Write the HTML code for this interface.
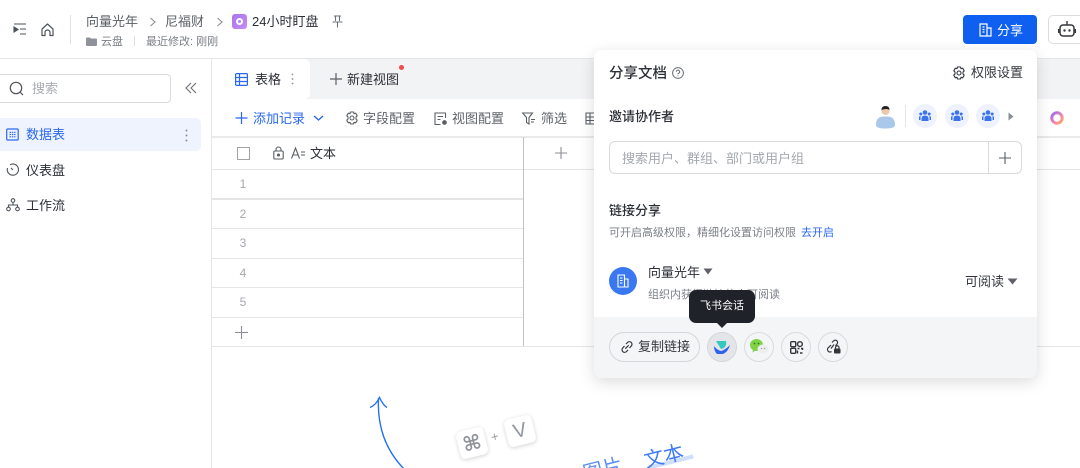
<!DOCTYPE html>
<html lang="zh"><head><meta charset="utf-8">
<style>
*{box-sizing:border-box}
html,body{margin:0;padding:0;width:1080px;height:468px;overflow:hidden;background:#fff}
#w{position:absolute;left:0;top:0;width:1080px;height:468px;overflow:hidden;background:#fff;filter:blur(.35px);font-family:"Liberation Sans","Noto Sans CJK SC",sans-serif;color:#2b2f36}
.a{position:absolute}
.t{position:absolute;white-space:nowrap;line-height:20px;height:20px;font-size:13px}
.l{position:absolute;background:#e4e5e7}
svg{position:absolute;overflow:visible}
.n{position:absolute;left:236px;width:14px;text-align:center;font-size:12px;line-height:16px;color:#a4a8ae}
.circ{position:absolute;width:30px;height:30px;border-radius:50%;border:1px solid #d9dadc;top:332px}
.g{position:absolute;width:24px;height:24px;border-radius:50%;background:#edf2fe;top:104px}
</style></head><body><div id="w">

<!-- top bar -->
<svg style="left:13px;top:23px" width="14" height="13" fill="none" stroke="#4e5359" stroke-width="1.100"><path d="M1 1H13M7 6H13M7 11H13"/><path d="M1 4L5 6.500 1 9Z" fill="#4e5359"/></svg>
<svg style="left:41px;top:23px" width="14" height="14" fill="none" stroke="#4e5359" stroke-width="1.200"><path d="M1 6L6.500 1 12 6V12.500H9V9.500A2.500 2.500 0 0 0 4 9.500V12.500H1Z" stroke-linejoin="round"/></svg>
<div class="l" style="left:70px;top:15px;width:1px;height:29px;background:#dfe0e2"></div>
<div class="t" style="left:86px;top:12px;color:#5a5f66">向量光年</div>
<svg style="left:149px;top:17px" width="8" height="10" fill="none" stroke="#8a8e94" stroke-width="1.100"><path d="M1.500 1L6 5 1.500 9"/></svg>
<div class="t" style="left:165px;top:12px;color:#5a5f66">尼福财</div>
<svg style="left:216px;top:17px" width="8" height="10" fill="none" stroke="#8a8e94" stroke-width="1.100"><path d="M1.500 1L6 5 1.500 9"/></svg>
<div class="a" style="left:232px;top:14px;width:15px;height:15px;border-radius:3px;background:linear-gradient(135deg,#a876f0,#c58cf2)"></div>
<div class="a" style="left:236px;top:18px;width:7px;height:7px;border-radius:50%;border:2px solid #fff"></div>
<div class="t" style="left:252px;top:12px;color:#2b2f36">24小时盯盘</div>
<svg style="left:332px;top:15px" width="11" height="13" fill="none" stroke="#6b7077" stroke-width="1.100"><path d="M2 1H9M3.500 1V6M7.500 1V6M0.500 7H10.500M5.500 7V12.500"/></svg>
<svg style="left:86px;top:37px" width="11" height="9"><path d="M0 1.500Q0 .5 1 .5H4L5 1.500H10Q11 1.500 11 2.500V8Q11 9 10 9H1Q0 9 0 8Z" fill="#8f9399"/></svg>
<div class="t" style="left:101px;top:32px;font-size:11px;color:#7c8087">云盘</div>
<div class="l" style="left:134px;top:36px;width:1px;height:10px;background:#dfe0e2"></div>
<div class="t" style="left:146px;top:32px;font-size:11px;color:#7c8087">最近修改: 刚刚</div>

<div class="a" style="left:963px;top:15px;width:74px;height:29px;border-radius:4px;background:#0f5ff0"></div>
<svg style="left:979px;top:23px" width="13" height="14" fill="none" stroke="#fff" stroke-width="1.200"><path d="M1 13V1H8V13ZM8 5H12V13H1"/><path d="M3.500 4H5.500M3.500 6.500H5.500M3.500 9H5.500"/></svg>
<div class="t" style="left:997px;top:21px;color:#fff">分享</div>
<div class="a" style="left:1048px;top:15px;width:60px;height:29px;border-radius:5px;border:1px solid #dcdde0"></div>
<svg style="left:1058px;top:21px" width="18" height="17"><rect x="2" y="4" width="14" height="11" rx="3" fill="none" stroke="#33373d" stroke-width="1.500"/><path d="M9 0V4M0.700 8V12M17.300 8V12" stroke="#33373d" stroke-width="1.400"/><circle cx="6.500" cy="9.500" r="1.200" fill="#33373d"/><circle cx="11.500" cy="9.500" r="1.200" fill="#33373d"/></svg>
<div class="l" style="left:0;top:58px;width:1080px;height:1px;background:#e5e6e8"></div>

<!-- sidebar -->
<div class="l" style="left:211px;top:59px;width:1px;height:409px;background:#e5e6e8"></div>
<div class="a" style="left:-6px;top:74px;width:177px;height:29px;border-radius:4px;border:1px solid #d9dadc"></div>
<svg style="left:9px;top:81px" width="15" height="15" fill="none" stroke="#4e5359" stroke-width="1.200"><circle cx="7" cy="7" r="5.700"/><path d="M11 11L14 14"/></svg>
<div class="t" style="left:32px;top:79px;color:#a9acb1">搜索</div>
<svg style="left:185px;top:82px" width="12" height="12" fill="none" stroke="#6b7077" stroke-width="1.100"><path d="M6 1L1 6 6 11M11 1L6 6 11 11"/></svg>
<div class="a" style="left:-6px;top:118px;width:207px;height:33px;border-radius:5px;background:#eef3fe"></div>
<svg style="left:6px;top:128px" width="14" height="14" fill="none" stroke="#2a67ee" stroke-width="1.200"><rect x=".7" y="1" width="11.500" height="11" rx="1"/><path d="M3.500 4.300H9.500M3.500 6.500H9.500M3.500 8.800H9.500" stroke-dasharray="1.500 .8"/></svg>
<div class="t" style="left:26px;top:125px;color:#2a67ee">数据表</div>
<svg style="left:185px;top:129px" width="3" height="13" fill="#8a8e94"><circle cx="1.500" cy="1.500" r="1"/><circle cx="1.500" cy="6.500" r="1"/><circle cx="1.500" cy="11.500" r="1"/></svg>
<svg style="left:6px;top:163px" width="14" height="14" fill="none" stroke="#4e5359" stroke-width="1.100"><path d="M4 1.800A5.600 5.600 0 1 1 1.500 5"/><path d="M6.800 7L5 4.800"/></svg>
<div class="t" style="left:26px;top:161px">仪表盘</div>
<svg style="left:6px;top:198px" width="14" height="14" fill="none" stroke="#4e5359" stroke-width="1.100"><circle cx="7" cy="2.500" r="1.800"/><circle cx="2.500" cy="11" r="1.800"/><circle cx="11.500" cy="11" r="1.800"/><path d="M7 4.500V7M2.500 9V7H11.500V9"/></svg>
<div class="t" style="left:26px;top:196px">工作流</div>

<!-- tabs -->
<div class="a" style="left:212px;top:59px;width:868px;height:40px;background:#f2f3f5"></div>
<div class="a" style="left:212px;top:59px;width:98px;height:40px;background:#fff;border-bottom-right-radius:6px;border-top-right-radius:6px"></div>
<svg style="left:235px;top:73px" width="13" height="13" fill="none" stroke="#2a67ee" stroke-width="1.200"><rect x=".6" y=".6" width="11.800" height="11.800" rx="1"/><path d="M.6 4.500H12.400M.6 8.500H12.400M4.500 .6V12.400"/></svg>
<div class="t" style="left:255px;top:70px;color:#2b2f36">表格</div>
<svg style="left:291px;top:73px" width="3" height="12" fill="#8a8e94"><circle cx="1.500" cy="1.500" r=".9"/><circle cx="1.500" cy="6" r=".9"/><circle cx="1.500" cy="10.500" r=".9"/></svg>
<svg style="left:330px;top:73px" width="12" height="12" stroke="#5a5f66" stroke-width="1.200"><path d="M6 0V12M0 6H12"/></svg>
<div class="t" style="left:347px;top:70px">新建视图</div>
<div class="a" style="left:398.500px;top:64.500px;width:5px;height:5px;border-radius:50%;background:#f54a45"></div>

<!-- toolbar -->
<svg style="left:235px;top:112px" width="13" height="12" stroke="#2a67ee" stroke-width="1.200"><path d="M6.500 0V12M.5 6H12.500"/></svg>
<div class="t" style="left:253px;top:109px;color:#2a67ee">添加记录</div>
<svg style="left:313px;top:115px" width="11" height="7" fill="none" stroke="#2a67ee" stroke-width="1.400"><path d="M1 1L5.500 5 10 1"/></svg>
<svg style="left:345px;top:111px" width="14" height="14" fill="none" stroke="#5a5f66" stroke-width="1.100" stroke-linejoin="round"><path d="M5.500 1H8.500L9 2.700 10.700 2.200 12.200 4.800 11 6V8L12.200 9.200 10.700 11.800 9 11.300 8.500 13H5.500L5 11.300 3.300 11.800 1.800 9.200 3 8V6L1.800 4.800 3.300 2.200 5 2.700Z"/><circle cx="7" cy="7" r="2"/></svg>
<div class="t" style="left:363px;top:109px;color:#5f6369">字段配置</div>
<svg style="left:434px;top:112px" width="14" height="14" fill="none" stroke="#5a5f66" stroke-width="1.100"><path d="M11.500 6V1H1V12.500H6.500M3.500 4.500H9M3.500 7.500H6.500"/><circle cx="10.500" cy="10.500" r="1.800" fill="#5a5f66"/></svg>
<div class="t" style="left:452px;top:109px;color:#5f6369">视图配置</div>
<svg style="left:522px;top:112px" width="14" height="13" fill="none" stroke="#5a5f66" stroke-width="1.100"><path d="M.7 1H10.500L7 5.500V12L4.500 10.500V5.500ZM9 7.500H13M9 10H12"/></svg>
<div class="t" style="left:541px;top:109px;color:#5f6369">筛选</div>
<svg style="left:585px;top:112px" width="10" height="13" fill="none" stroke="#5a5f66" stroke-width="1.100"><path d="M10 1H1V12H10M1 5H10M1 8.500H10M5 1V12"/></svg>
<svg style="left:1050px;top:111px" width="14" height="14" fill="none" stroke-width="3"><defs><linearGradient id="gr" x1="0" y1="0" x2="1" y2="1"><stop offset="0" stop-color="#9a6cf0"/><stop offset=".6" stop-color="#f08ab0"/><stop offset="1" stop-color="#fbab5c"/></linearGradient></defs><circle cx="7" cy="7" r="5.200" stroke="url(#gr)"/></svg>
<div class="l" style="left:212px;top:136px;width:868px;height:2px;background:#e9eaec"></div>

<!-- table -->
<div class="a" style="left:237px;top:147px;width:13px;height:13px;border:1.500px solid #a0a3a8"></div>
<svg style="left:273px;top:146px" width="11" height="14" fill="none" stroke="#5a5f66" stroke-width="1.100"><rect x=".8" y="5" width="9.400" height="8" rx="1"/><path d="M3 5V3.500A2.500 2.500 0 0 1 8 3.500V5"/><circle cx="5.500" cy="9" r="1" fill="#5a5f66"/></svg>
<svg style="left:291px;top:147px" width="15" height="12" fill="none" stroke="#5a5f66" stroke-width="1.100"><path d="M.5 11.500L4.500 1 8.500 11.500M2 8H7M10 5H14M10 8H14"/></svg>
<div class="t" style="left:310px;top:144px">文本</div>
<svg style="left:555px;top:147px" width="12" height="12" stroke="#8a8e94" stroke-width="1.100"><path d="M6 0V12M0 6H12"/></svg>
<div class="l" style="left:212px;top:169px;width:868px;height:1px"></div>
<div class="l" style="left:212px;top:198px;width:311px;height:1.500px"></div>
<div class="l" style="left:212px;top:228px;width:311px;height:1px"></div>
<div class="l" style="left:212px;top:257.500px;width:311px;height:1.500px"></div>
<div class="l" style="left:212px;top:287px;width:311px;height:1px"></div>
<div class="l" style="left:212px;top:316.500px;width:311px;height:1.500px"></div>
<div class="l" style="left:212px;top:346px;width:868px;height:1px"></div>
<div class="l" style="left:523px;top:137px;width:1px;height:209px;background:#bfc1c5"></div>
<div class="n" style="top:176px">1</div>
<div class="n" style="top:206px">2</div>
<div class="n" style="top:235px">3</div>
<div class="n" style="top:265px">4</div>
<div class="n" style="top:294px">5</div>
<svg style="left:235px;top:326px" width="13" height="13" stroke="#8a8e94" stroke-width="1.100"><path d="M6.500 0V13M0 6.500H13"/></svg>

<!-- bottom illustration -->
<svg style="left:365px;top:390px" width="60" height="80" fill="none" stroke="#2272f6" stroke-width="1.400"><path d="M13.500 8C12 38 22 62 40 80"/><path d="M5 17.500Q11 15 14.500 7.500Q18 15 22 17.500"/></svg>
<div class="a" style="left:458px;top:429px;width:28px;height:28px;border-radius:5px;background:#fff;box-shadow:0 1px 4px rgba(0,0,0,.18);transform:rotate(-14deg);text-align:center;font-size:20px;line-height:28px;color:#8f9399;font-family:'DejaVu Sans',sans-serif;font-weight:bold">⌘</div>
<div class="t" style="left:491px;top:427px;color:#9a9da3;transform:rotate(-14deg)">+</div>
<div class="a" style="left:506px;top:417px;width:28px;height:28px;border-radius:5px;background:#fff;box-shadow:0 1px 4px rgba(0,0,0,.18);transform:rotate(-14deg);text-align:center;font-size:20px;line-height:28px;color:#9095a0">V</div>
<div class="a" style="left:648px;top:460px;width:46px;height:4px;background:#cfdffc;transform:rotate(-14deg)"></div>
<div class="t" style="left:561px;top:459px;font-size:20px;line-height:24px;height:24px;color:#5c8ff5;transform:rotate(-14deg)">、</div>
<div class="t" style="left:583px;top:458px;font-size:20px;line-height:24px;height:24px;color:#5c8ff5;transform:rotate(-14deg)">图片</div>
<div class="t" style="left:628px;top:453px;font-size:20px;line-height:24px;height:24px;color:#5c8ff5;transform:rotate(-14deg)">、</div>
<div class="t" style="left:644px;top:445px;font-size:20px;line-height:24px;height:24px;color:#3f7cf4;transform:rotate(-14deg)">文本</div>

<!-- popup -->
<div class="a" style="left:594px;top:50px;width:443px;height:328px;border-radius:8px;background:#fff;box-shadow:0 4px 16px rgba(0,0,0,.14);overflow:hidden">
  <div class="a" style="left:0;top:267px;width:443px;height:61px;background:#f4f5f7"></div>
</div>
<div class="t" style="left:609px;top:64px;font-size:14.500px;font-weight:500">分享文档</div>
<svg style="left:672px;top:67px" width="12" height="12" fill="none" stroke="#6b7077" stroke-width="1"><circle cx="6" cy="6" r="5.400"/><path d="M4.300 4.800A1.700 1.700 0 1 1 6 6.500V7.300M6 8.500V9.400"/></svg>
<svg style="left:952px;top:66px" width="14" height="14" fill="none" stroke="#33373d" stroke-width="1.100" stroke-linejoin="round"><path d="M5.500 1H8.500L9 2.700 10.700 2.200 12.200 4.800 11 6V8L12.200 9.200 10.700 11.800 9 11.300 8.500 13H5.500L5 11.300 3.300 11.800 1.800 9.200 3 8V6L1.800 4.800 3.300 2.200 5 2.700Z"/><circle cx="7" cy="7" r="2"/></svg>
<div class="t" style="left:971px;top:63px;color:#33373d">权限设置</div>
<div class="t" style="left:609px;top:107px;font-weight:500">邀请协作者</div>
<svg style="left:875px;top:105px" width="21" height="24"><circle cx="10.500" cy="6" r="4" fill="#ecc8b0"/><path d="M6.500 5Q6.500 1 10.500 1T14.500 5Q12 3 6.500 5Z" fill="#222"/><path d="M1 20Q1 12 8 11.500H13Q20 12 20 20Q20 23.500 10.500 23.500T1 20Z" fill="#a9c8ea"/></svg>
<div class="l" style="left:905px;top:105px;width:1px;height:22px;background:#e4e5e7"></div>
<div class="g" style="left:913px"></div><div class="g" style="left:945px"></div><div class="g" style="left:976px"></div>
<svg style="left:919px;top:110px" width="12" height="11" fill="#3c74ee"><circle cx="6" cy="2.500" r="2.300"/><circle cx="1.800" cy="4" r="1.500"/><circle cx="10.200" cy="4" r="1.500"/><path d="M2.500 11V8.500Q2.500 5.500 6 5.500T9.500 8.500V11ZM0 10V7.500Q0 6 1.500 6V10ZM12 10V7.500Q12 6 10.500 6V10Z"/></svg>
<svg style="left:951px;top:110px" width="12" height="11" fill="#3c74ee"><circle cx="6" cy="2.500" r="2.300"/><circle cx="1.800" cy="4" r="1.500"/><circle cx="10.200" cy="4" r="1.500"/><path d="M2.500 11V8.500Q2.500 5.500 6 5.500T9.500 8.500V11ZM0 10V7.500Q0 6 1.500 6V10ZM12 10V7.500Q12 6 10.500 6V10Z"/></svg>
<svg style="left:982px;top:110px" width="12" height="11" fill="#3c74ee"><circle cx="6" cy="2.500" r="2.300"/><circle cx="1.800" cy="4" r="1.500"/><circle cx="10.200" cy="4" r="1.500"/><path d="M2.500 11V8.500Q2.500 5.500 6 5.500T9.500 8.500V11ZM0 10V7.500Q0 6 1.500 6V10ZM12 10V7.500Q12 6 10.500 6V10Z"/></svg>
<svg style="left:1008px;top:112px" width="6" height="9" fill="#8a8e94"><path d="M.5 .5L5.500 4.500 .5 8.500Z"/></svg>

<div class="a" style="left:609px;top:141px;width:413px;height:33px;border-radius:6px;border:1px solid #d9dadc"></div>
<div class="l" style="left:988px;top:142px;width:1px;height:32px;background:#d9dadc"></div>
<div class="t" style="left:622px;top:149px;color:#a4a8ae">搜索用户、群组、部门或用户组</div>
<svg style="left:999px;top:152px" width="12" height="12" stroke="#5a5f66" stroke-width="1.100"><path d="M6 0V12M0 6H12"/></svg>

<div class="t" style="left:609px;top:201px;font-weight:500">链接分享</div>
<div class="t" style="left:609px;top:223px;font-size:11px;color:#7c8087">可开启高级权限，精细化设置访问权限</div>
<div class="t" style="left:801px;top:223px;font-size:11px;color:#2a67ee">去开启</div>

<div class="a" style="left:609px;top:267px;width:28px;height:28px;border-radius:50%;background:#3a78f2"></div>
<svg style="left:617px;top:274px" width="12" height="14" fill="none" stroke="#fff" stroke-width="1.100"><path d="M1 13V1H7.500V13ZM7.500 5H11V13H1M3 4H5.500M3 6.500H5.500M3 9H5.500"/></svg>
<div class="t" style="left:648px;top:263px">向量光年</div>
<svg style="left:703px;top:268px" width="10" height="7" fill="#5f6369"><path d="M.5 .5H9.500L5 6.500Z"/></svg>
<div class="t" style="left:648px;top:285px;font-size:11px;color:#7c8087">组织内获得链接的人可阅读</div>
<div class="t" style="left:965px;top:272px;color:#33373d">可阅读</div>
<svg style="left:1007px;top:278px" width="11" height="7" fill="#5f6369"><path d="M.5 .5H10.500L5.500 6.500Z"/></svg>

<!-- footer buttons -->
<div class="a" style="left:609px;top:332px;width:91px;height:30px;border-radius:15px;border:1px solid #d3d5d8"></div>
<svg style="left:621px;top:341px" width="12" height="12" fill="none" stroke="#33373d" stroke-width="1.200"><path d="M5 3L6.500 1.500A2.300 2.300 0 0 1 10.300 5L8.500 7M7 9L5.500 10.500A2.300 2.300 0 0 1 1.700 7L3.500 5M4.300 7.700L7.700 4.300"/></svg>
<div class="t" style="left:638px;top:337px;color:#33373d">复制链接</div>
<div class="circ" style="left:707px;background:#e4e5e8;border-color:#d5d6d9"></div>
<svg style="left:714px;top:341px" width="16" height="13"><path d="M2 0H12Q13 4 10 7L7 8Z" fill="#36c7bd"/><path d="M0 5Q3 9 7 10 11 9 16 4 14 11 9 13H3Q0 10 0 5Z" fill="#2f62e8"/></svg>
<div class="circ" style="left:744px"></div>
<svg style="left:750px;top:339px" width="19" height="15"><ellipse cx="6.500" cy="6" rx="6.500" ry="6" fill="#7ed348"/><path d="M3 10L2.500 13.500 6 11Z" fill="#7ed348"/><circle cx="4.500" cy="4.500" r=".9" fill="#2f7a20"/><circle cx="8.500" cy="4.500" r=".9" fill="#2f7a20"/><ellipse cx="13" cy="10" rx="5.500" ry="4.500" fill="#eceef0"/><circle cx="11.500" cy="9.500" r=".7" fill="#9a9da3"/><circle cx="14.500" cy="9.500" r=".7" fill="#9a9da3"/></svg>
<div class="circ" style="left:781px"></div>
<svg style="left:790px;top:341px" width="13" height="13" fill="none" stroke="#33373d" stroke-width="1.400"><rect x=".7" y=".7" width="5" height="5" rx="1"/><rect x=".7" y="7.300" width="5" height="5" rx="1"/><rect x="7.500" y=".7" width="4.800" height="4.800" rx="2.400"/><path d="M7.500 7.500H9.500M11 7.500H12.500V9M7.500 9.500V12.500M10 12H12.500"/></svg>
<div class="circ" style="left:818px"></div>
<svg style="left:826px;top:339px" width="15" height="16" fill="none" stroke="#33373d" stroke-width="1.200"><path d="M6 3.500L7.500 2A2.300 2.300 0 0 1 11 5L9.500 7M5 6L2.500 8.500A2.300 2.300 0 0 0 5.500 12.500M5 9.500L8 5.500"/><rect x="8" y="9.500" width="6.500" height="5" rx="1" fill="#33373d" stroke="none"/><path d="M9.500 9.500V8.500A1.700 1.700 0 0 1 13 8.500V9.500"/></svg>

<!-- tooltip -->
<div class="a" style="left:689px;top:290px;width:66px;height:33px;border-radius:7px;background:#1f2329"></div>
<svg style="left:717px;top:323px" width="10" height="5" fill="#1f2329"><path d="M0 0H10L5 5Z"/></svg>
<div class="t" style="left:700px;top:297px;font-size:11px;color:#fff;line-height:18px">飞书会话</div>
</div></body></html>
